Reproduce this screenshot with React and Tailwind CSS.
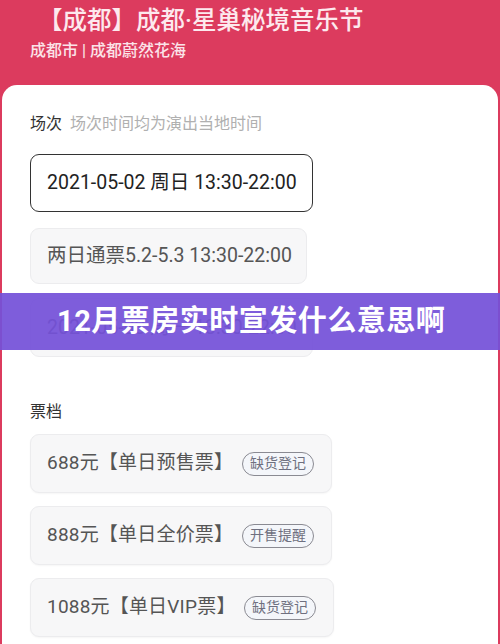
import React from "react";

const F = { fontFamily: 'Roboto, "Noto Sans CJK SC", "Noto Sans", sans-serif' };

function Ticket({ price, name, badge, w }) {
  return (
    <div className={`${w} h-[59px] flex items-center justify-between pl-4 pr-[17px] bg-[#f7f7f8] border border-[#ececee] rounded-[9px] shadow-[0_1px_2px_rgba(0,0,0,0.04)]`}>
      <span className="text-[19px] text-[#555] tracking-[0.2px]">
        {price}【{name}】
      </span>
      <span className="h-[24px] px-[7px] flex items-center rounded-full border-[1.5px] border-[#8a8a92] text-[14px] text-[#6f7080] bg-[#f4f6fa]">
        {badge}
      </span>
    </div>
  );
}

export default function App() {
  return (
    <div className="w-[500px] h-[644px] overflow-hidden relative bg-[#dc3b5e]" style={F}>
      <div className="h-[85px] flex flex-col">
        <div className="pl-[38px] pt-[6px] text-[24.5px] leading-[30px] font-medium text-[#fde9ee]">【成都】成都·星巢秘境音乐节</div>
        <div className="pl-[30px] pt-[5px] text-[16px] leading-[20px] font-medium text-[#fbe3e9]">成都市 | 成都蔚然花海</div>
      </div>
      <div className="mx-[2px] bg-white rounded-t-[15px] h-[559px] px-[28px] flex flex-col">
        <div className="pt-[28px] flex items-center gap-[8px] h-[50px]">
          <span className="text-[16px] text-[#333]">场次</span>
          <span className="text-[16px] text-[#b0b0b0]">场次时间均为演出当地时间</span>
        </div>
        <div className="mt-[19px] w-[283px] h-[58px] flex items-center pl-[16px] border-[1.5px] border-[#333] rounded-[9px] text-[19.5px] text-[#222]">
          2021-05-02 周日 13:30-22:00
        </div>
        <div className="mt-[16px] w-[277px] h-[56px] flex items-center pl-[16px] border border-[#ececee] bg-[#f7f7f8] rounded-[9px] text-[19.5px] text-[#555]">
          两日通票5.2-5.3 13:30-22:00
        </div>
        <div className="mt-[14px] w-[283px] h-[59px] flex items-center pl-[16px] border border-[#ececee] bg-[#f7f7f8] rounded-[9px] text-[19.5px] text-[#555]">
          2021-05-03 周一 13:30-22:00
        </div>
        <div className="mt-[45px] text-[16px] leading-[20px] text-[#333]">票档</div>
        <div className="mt-[12px] flex flex-col gap-[13px]">
          <Ticket price="688元" name="单日预售票" badge="缺货登记" w="w-[302px]" />
          <Ticket price="888元" name="单日全价票" badge="开售提醒" w="w-[302px]" />
          <Ticket price="1088元" name="单日VIP票" badge="缺货登记" w="w-[304px]" />
        </div>
      </div>
      <div className="absolute left-0 right-0 top-[293px] h-[57px] bg-[#7451d8]/[0.93] flex items-center pl-[57px]">
        <span className="text-[29px] font-bold text-white tracking-[0.5px]">12月票房实时宣发什么意思啊</span>
      </div>
    </div>
  );
}
